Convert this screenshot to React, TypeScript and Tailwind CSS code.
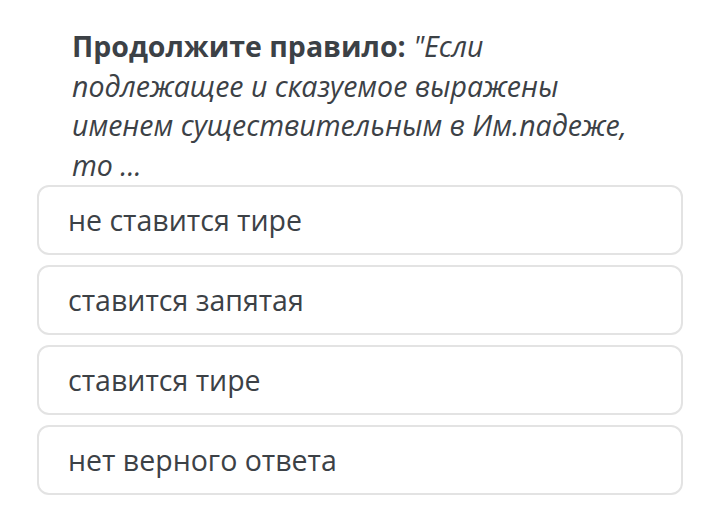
const OPTIONS = ['не ставится тире', 'ставится запятая', 'ставится тире', 'нет верного ответа'];

const App = () => {
  return (
    <div
      className="w-[720px] h-[521px] bg-white overflow-hidden text-[#3c4146]"
      style={{ fontFamily: '"Open Sans", "Noto Sans", sans-serif' }}
    >
      <div className="pt-[27px] pl-[72px] pr-[40px]">
        <p className="text-[28.5px] leading-[39.5px]">
          <span className="font-bold">Продолжите правило:</span>{' '}
          <span className="italic">
            "Если
            <br />
            подлежащее и сказуемое выражены
            <br />
            именем существительным в Им.падеже,
            <br />
            то ...
          </span>
        </p>
      </div>
      <div className="flex flex-col gap-[10px] px-[37px] mt-[0px]">
        {OPTIONS.map((o) => (
          <div
            key={o}
            className="h-[70px] rounded-[12px] border-2 border-[#e3e3e3] flex items-center pl-[29px] text-[28.5px]"
          >
            {o}
          </div>
        ))}
      </div>
    </div>
  );
};

export default App;
